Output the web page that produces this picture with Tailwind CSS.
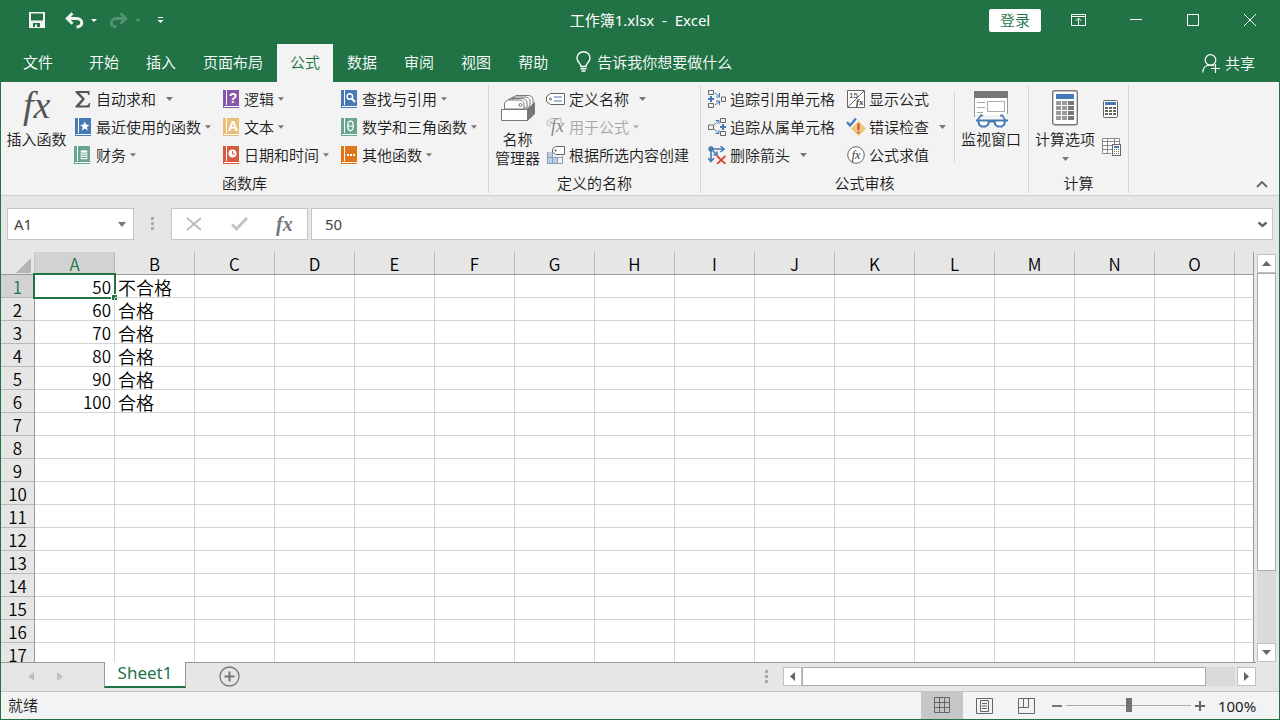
<!DOCTYPE html>
<html lang="zh-CN">
<head>
    <meta charset="UTF-8">
    <meta name="viewport" content="width=device-width, initial-scale=1.0">
    <title>工作簿1.xlsx - Excel</title>
    <script src="https://cdn.jsdelivr.net/npm/@tailwindcss/browser@4"></script>
</head>
<body class="h-screen flex flex-col overflow-hidden border-x border-b border-[#217346] bg-[#e6e6e6] font-['Noto_Sans','Noto_Sans_CJK_SC',sans-serif] font-[350] text-[15px] leading-5 text-[#1c1c1c]">

    <!-- title bar -->
    <header class="bg-[#217346] text-white">
        <div class="grid grid-cols-[1fr_auto_1fr] items-center h-11 pb-1">
            <div class="flex items-center pl-7">
                <button aria-label="保存">
                    <svg width="16" height="16" viewBox="0 0 16 16"><path d="M0 0h16v16H0zM2 1.500v7h12v-7zM4 11v4h2v-2.500h2V15h3v-4z" fill="#f3f3f3" fill-rule="evenodd"/></svg>
                </button>
                <button class="ml-5" aria-label="撤消">
                    <svg width="19" height="18" viewBox="0 0 19 18" fill="none" stroke="#f3f3f3"><path d="M3 7.500h8.500c7 0 7 8.500 0 8.500" stroke-width="3"/><path d="M7.500 2.300 2.200 7.500 7.500 12.700" stroke-width="2.800"/></svg>
                </button>
                <button class="ml-[7px]" aria-label="撤消选项">
                    <svg width="6" height="3" viewBox="0 0 6 3"><path d="M0 0h6L3 3z" fill="#fff"/></svg>
                </button>
                <button class="ml-3" aria-label="恢复" disabled>
                    <svg width="19" height="18" viewBox="0 0 19 18" fill="none" stroke="#529270"><path d="M16 7.500H7.500c-7 0-7 8.500 0 8.500" stroke-width="3"/><path d="M11.500 2.300 16.800 7.500 11.500 12.700" stroke-width="2.800"/></svg>
                </button>
                <button class="ml-[7px]" aria-label="恢复选项" disabled>
                    <svg width="6" height="3" viewBox="0 0 6 3"><path d="M0 0h6L3 3z" fill="#529270"/></svg>
                </button>
                <button class="ml-4" aria-label="自定义快速访问工具栏">
                    <svg width="7" height="6" viewBox="0 0 7 6"><path d="M1 0h5v1H1zM.5 3h6l-3 3z" fill="#fff"/></svg>
                </button>
            </div>
            <h1 class="text-[15px] font-normal whitespace-pre">工作簿1.xlsx  -  Excel</h1>
            <div class="flex items-center justify-end pr-px">
                <button class="bg-white text-[#217346] rounded-xs w-13 h-[23px] leading-[23px] mr-[9px]">登录</button>
                <button class="w-[57px] flex justify-center" aria-label="功能区显示选项">
                    <svg width="15" height="12" viewBox="0 0 15 12" fill="none" stroke="#fff"><path d="M.5.5h14v11H.5zM0 2.500h15M7.500 11V4.500M4.500 7l3-3 3 3"/></svg>
                </button>
                <button class="w-[57px] flex justify-center" aria-label="最小化">
                    <svg width="12" height="12" viewBox="0 0 12 12"><path d="M0 5h12v1H0z" fill="#fff"/></svg>
                </button>
                <button class="w-[57px] flex justify-center" aria-label="最大化">
                    <svg width="12" height="12" viewBox="0 0 12 12" fill="none" stroke="#fff"><path d="M.5.5h11v11H.5z"/></svg>
                </button>
                <button class="w-[57px] flex justify-center" aria-label="关闭">
                    <svg width="12" height="12" viewBox="0 0 12 12" stroke="#fff"><path d="M0 0l12 12M12 0L0 12"/></svg>
                </button>
            </div>
        </div>

        <!-- tabs -->
        <nav class="flex h-[38px]">
            <button class="px-[13px] pb-[3px] ml-[9px] mr-[10px]">文件</button>
            <div class="flex gap-px">
                <button class="px-[13px] pb-[3px]">开始</button>
                <button class="px-[13px] pb-[3px]">插入</button>
                <button class="px-[13px] pb-[3px]">页面布局</button>
                <button class="px-[13px] pb-[3px] bg-[#f3f3f3] text-[#217346]">公式</button>
                <button class="px-[13px] pb-[3px]">数据</button>
                <button class="px-[13px] pb-[3px]">审阅</button>
                <button class="px-[13px] pb-[3px]">视图</button>
                <button class="px-[13px] pb-[3px]">帮助</button>
            </div>
            <button class="flex items-center gap-[6px] ml-[15px] pb-[3px]">
                <svg width="15" height="21" viewBox="0 0 15 21" fill="none" stroke="#fff" stroke-width="1.400"><path d="M5 15.500c0-3-4-4.500-4-8.500a6.500 6.300 0 0 1 13 0c0 4-4 5.500-4 8.500zM4.500 17.800h6M5.500 20h4"/></svg>
                <span>告诉我你想要做什么</span>
            </button>
            <button class="flex items-center gap-1 ml-auto mr-6">
                <svg width="19" height="19" viewBox="0 0 19 19" fill="none" stroke="#fff" stroke-width="1.200"><circle cx="8.500" cy="6" r="5.300"/><path d="M.8 18.500c0-5 3-7.500 7.700-7.500 1.500 0 2.500.3 3.500.9M9 14.500h9M13.500 10v9"/></svg>
                <span>共享</span>
            </button>
        </nav>
    </header>

    <!-- ribbon -->
    <div class="flex bg-[#f3f3f3] border-b border-[#d0d0d0] pt-[3px] pb-[2px] whitespace-nowrap">
        <section class="w-[488px] border-r border-[#d4d4d4]">
            <div class="flex h-21">
                <button class="flex flex-col items-center w-[73px] pt-[5px] pr-[2px] leading-[19px]">
                    <svg class="overflow-visible" width="32" height="36" viewBox="0 0 32 36"><text x="2" y="28" font-family="Liberation Serif, serif" font-style="italic" font-size="38" fill="#555">fx</text></svg>
                    <span class="mt-1">插入函数</span>
                </button>
                <div class="grid grid-cols-[148px_118px_auto] grid-rows-3">
                    <button class="flex items-center">
                        <svg class="mr-1" width="18" height="18" viewBox="0 0 18 18"><path d="M1.500 1h14v4h-1.200c-.3-1.500-.8-2-2.300-2H5.500l5.500 6-5.500 6.500H12c1.700 0 2.500-.7 3-2.500h1.200L15.500 17.500h-14V16l6.500-7-6.500-6.500z" fill="#555"/></svg>
                        <span>自动求和</span>
                        <svg class="ml-[10px]" width="7" height="4" viewBox="0 0 7 4"><path d="M0 0h7L3.500 4z" fill="#777"/></svg>
                    </button>
                    <button class="flex items-center">
                        <svg class="mr-1" width="18" height="18" viewBox="0 0 18 18"><path d="M1 0h16v18H1z" fill="#477ab5"/><path d="M4 0h1v15H4zM2 16h15v1H2zM10.800 3.500l1.300 3.100 3.300.3-2.500 2.200.8 3.300-2.900-1.800-2.900 1.800.8-3.300-2.500-2.200 3.300-.3z" fill="#fff"/></svg>
                        <span>最近使用的函数</span>
                        <svg class="ml-1" width="6" height="4" viewBox="0 0 7 4"><path d="M0 0h7L3.500 4z" fill="#777"/></svg>
                    </button>
                    <button class="flex items-center">
                        <svg class="mr-1" width="18" height="18" viewBox="0 0 18 18"><path d="M0 0h16v18H0z" fill="#6aa68f"/><path d="M3 0h1v15H3zM1 16h15v1H1z" fill="#fff"/><ellipse cx="10" cy="5.500" rx="3.500" ry="1.300" fill="#fff"/><path d="M6.500 7.500c1.500 1 5.500 1 7 0M6.500 9.700c1.500 1 5.500 1 7 0M6.500 12c1.500 1 5.500 1 7 0" stroke="#fff" stroke-width="1.200" fill="none"/></svg>
                        <span>财务</span>
                        <svg class="ml-1" width="6" height="4" viewBox="0 0 7 4"><path d="M0 0h7L3.500 4z" fill="#777"/></svg>
                    </button>
                    <button class="flex items-center col-start-2 row-start-1">
                        <svg class="mr-1" width="18" height="18" viewBox="0 0 18 18"><path d="M1 0h16v18H1z" fill="#8756aa"/><path d="M4 0h1v15H4zM2 16h15v1H2z" fill="#fff"/><text x="11" y="13" text-anchor="middle" font-family="Liberation Sans, sans-serif" font-weight="bold" font-size="14" fill="#fff">?</text></svg>
                        <span>逻辑</span>
                        <svg class="ml-1" width="6" height="4" viewBox="0 0 7 4"><path d="M0 0h7L3.500 4z" fill="#777"/></svg>
                    </button>
                    <button class="flex items-center col-start-2 row-start-2">
                        <svg class="mr-1" width="18" height="18" viewBox="0 0 18 18"><path d="M1 0h16v18H1z" fill="#e9bf78"/><path d="M4 0h1v15H4zM2 16h15v1H2z" fill="#fff"/><text x="11" y="13" text-anchor="middle" font-family="Liberation Sans, sans-serif" font-weight="bold" font-size="14" fill="#fff">A</text></svg>
                        <span>文本</span>
                        <svg class="ml-1" width="6" height="4" viewBox="0 0 7 4"><path d="M0 0h7L3.500 4z" fill="#777"/></svg>
                    </button>
                    <button class="flex items-center col-start-2 row-start-3">
                        <svg class="mr-1" width="18" height="18" viewBox="0 0 18 18"><path d="M1 0h16v18H1z" fill="#d65a3f"/><path d="M4 0h1v15H4zM2 16h15v1H2z" fill="#fff"/><circle cx="10.500" cy="7.500" r="4" fill="#fff"/><path d="M10.500 5v3h2.500" stroke="#d65a3f" fill="none"/></svg>
                        <span>日期和时间</span>
                        <svg class="ml-1" width="6" height="4" viewBox="0 0 7 4"><path d="M0 0h7L3.500 4z" fill="#777"/></svg>
                    </button>
                    <button class="flex items-center col-start-3 row-start-1">
                        <svg class="mr-1" width="18" height="18" viewBox="0 0 18 18"><path d="M1 0h16v18H1z" fill="#477ab5"/><path d="M4 0h1v15H4zM2 16h15v1H2z" fill="#fff"/><circle cx="9.800" cy="6.500" r="2.800" fill="none" stroke="#fff" stroke-width="1.400"/><path d="M11.800 8.500l3.200 3.500" stroke="#fff" stroke-width="2"/></svg>
                        <span>查找与引用</span>
                        <svg class="ml-1" width="6" height="4" viewBox="0 0 7 4"><path d="M0 0h7L3.500 4z" fill="#777"/></svg>
                    </button>
                    <button class="flex items-center col-start-3 row-start-2">
                        <svg class="mr-1" width="18" height="18" viewBox="0 0 18 18"><path d="M1 0h16v18H1z" fill="#6aa68f"/><path d="M4 0h1v15H4zM2 16h15v1H2z" fill="#fff"/><ellipse cx="10.500" cy="8" rx="2.700" ry="4.800" fill="none" stroke="#fff" stroke-width="1.300"/><path d="M8 8h5" stroke="#fff"/></svg>
                        <span>数学和三角函数</span>
                        <svg class="ml-1" width="6" height="4" viewBox="0 0 7 4"><path d="M0 0h7L3.500 4z" fill="#777"/></svg>
                    </button>
                    <button class="flex items-center col-start-3 row-start-3">
                        <svg class="mr-1" width="18" height="18" viewBox="0 0 18 18"><path d="M1 0h16v18H1z" fill="#e2761b"/><path d="M4 0h1v15H4zM2 16h15v1H2zM7 8h2v2H7zM10 8h2v2h-2zM13 8h2v2h-2z" fill="#fff"/></svg>
                        <span>其他函数</span>
                        <svg class="ml-1" width="6" height="4" viewBox="0 0 7 4"><path d="M0 0h7L3.500 4z" fill="#777"/></svg>
                    </button>
                </div>
            </div>
            <h2 class="mt-1 font-[350] text-center">函数库</h2>
        </section>

        <section class="w-[212px] border-r border-[#d4d4d4]">
            <div class="flex h-21">
                <button class="flex flex-col items-center w-[57px] pt-[5px] leading-[19px]">
                    <svg width="36" height="36" viewBox="0 0 36 36" stroke="#777" fill="#fff">
                        <path d="M27.500 19.500l7-7v11.500l-7 6.500z" fill="#777"/>
                        <path d="M13 15V8l3-2.500h12c3 0 5 2 5 4V14l-5 5M10 16V9l3-2h12c3 0 5 2 5 4v4l-3 4M7 17v-6l3-2.500h12c3 0 5 2 5 4.500v5z"/>
                        <path d="M4.500 19v-6l3-3h12c2.500 0 4.500 1.500 4.500 4.500V19z"/>
                        <circle cx="20.500" cy="15" r="1.500"/>
                        <path d="M1.500 19.500h26v11h-26z"/>
                    </svg>
                    <span class="mt-1">名称<br>管理器</span>
                </button>
                <div class="grid grid-rows-3">
                    <button class="flex items-center">
                        <svg class="mr-1" width="19" height="18" viewBox="0 0 19 18" fill="#fff" stroke="#666"><path d="M4.500 3.500h14v11h-14l-4-3v-5z"/><circle cx="4.500" cy="9" r="1"/><path d="M8 7h8M8 11h8" stroke="#477ab5"/></svg>
                        <span>定义名称</span>
                        <svg class="ml-[10px]" width="7" height="4" viewBox="0 0 7 4"><path d="M0 0h7L3.500 4z" fill="#777"/></svg>
                    </button>
                    <button class="flex items-center text-[#a6a6a6]" disabled>
                        <svg class="mr-1 overflow-visible" width="19" height="18" viewBox="0 0 19 18" fill="none" stroke="#b1b1b1"><path d="M5 8.500l-4-2v-3l4-3h10v5"/><circle cx="5" cy="4.500" r="1"/><text x="5" y="14" font-family="Liberation Serif, serif" font-style="italic" font-size="18" fill="#888" stroke="none">fx</text></svg>
                        <span>用于公式</span>
                        <svg class="ml-1" width="6" height="4" viewBox="0 0 7 4"><path d="M0 0h7L3.500 4z" fill="#b1b1b1"/></svg>
                    </button>
                    <button class="flex items-center">
                        <svg class="mr-1" width="19" height="18" viewBox="0 0 19 18"><path d="M1 6h5v5H1zM1 12h5v5H1zM7 12h5v5H7z" fill="#b9cde5"/><path d="M1.500 6v11.500h15V10M6.500 6v11M11.500 11v6M1 11.500h15" stroke="#8c9db0" fill="none"/><path d="M9.500.5h9v8h-9l-3-2.500V3z" fill="#fff" stroke="#666"/><circle cx="9.500" cy="4.500" r="1" fill="#555"/></svg>
                        <span>根据所选内容创建</span>
                    </button>
                </div>
            </div>
            <h2 class="mt-1 font-[350] text-center">定义的名称</h2>
        </section>

        <section class="w-[328px] border-r border-[#d4d4d4]">
            <div class="flex h-21">
                <div class="grid grid-cols-[139px_107px] grid-rows-3 pl-[7px]">
                    <button class="flex items-center">
                        <svg class="mr-1" width="18" height="18" viewBox="0 0 18 18" fill="none"><path d="M.5.5h5v4h-5zM.5 13.500h5v4h-5zM13.500 7h4v4.500h-4z" stroke="#666"/><path d="M2 6h2v2h2v2H4v2H2v-2H0V8h2z" fill="#477ab5"/><path d="M7 3l4.500 3.500M11.500 3v4H8M7 15l4.500-3.500M11.500 15v-4H8" stroke="#477ab5"/></svg>
                        <span>追踪引用单元格</span>
                    </button>
                    <button class="flex items-center">
                        <svg class="mr-1" width="18" height="18" viewBox="0 0 18 18" fill="none"><path d="M12.500.5h5v4h-5zM12.500 13.500h5v4h-5zM.5 7h5v4.500h-5z" stroke="#666"/><path d="M14 6h2v2h2v2h-2v2h-2v-2h-2V8h2z" fill="#477ab5"/><path d="M6 7l5-4.500M7.500 2.500H11V6M6 11l5 4.500M7.500 15.500H11V12" stroke="#477ab5"/></svg>
                        <span>追踪从属单元格</span>
                    </button>
                    <button class="flex items-center">
                        <svg class="mr-1" width="18" height="18" viewBox="0 0 18 18" fill="none"><circle cx="3" cy="3" r="2.700" fill="#477ab5"/><path d="M4 3h11M12.500 0l3.500 3-3.500 3M3 4v11M0 12l3 3.500L6 12M5 5l4 4M9 5.500V9H5.500" stroke="#477ab5" stroke-width="1.600"/><path d="M9 10l8.500 8M17.500 10L9 18" stroke="#d6492a" stroke-width="1.800"/></svg>
                        <span>删除箭头</span>
                        <svg class="ml-[10px]" width="7" height="4" viewBox="0 0 7 4"><path d="M0 0h7L3.500 4z" fill="#777"/></svg>
                    </button>
                    <button class="flex items-center col-start-2 row-start-1">
                        <svg class="mr-1" width="18" height="18" viewBox="0 0 18 18"><path d="M.5.5h17v17H.5zM1 17L17 1" fill="#fff" stroke="#666"/><text x="2" y="8" font-family="Liberation Sans, sans-serif" font-size="8" fill="#333">15</text><text x="9" y="15" font-family="Liberation Serif, serif" font-style="italic" font-weight="bold" font-size="9" fill="#333">fx</text></svg>
                        <span>显示公式</span>
                    </button>
                    <button class="flex items-center col-start-2 row-start-2">
                        <svg class="mr-1 overflow-visible" width="18" height="18" viewBox="0 0 18 18"><path d="M11.500 3L19 10.500 11.500 18 4 10.500z" fill="#eec57c"/><path d="M10.500 5.500h2v6.500h-2zM10.500 13.500h2v2h-2z" fill="#d6492a"/><path d="M0 4l3 3.500L9 .5" stroke="#477ab5" stroke-width="2.200" fill="none"/></svg>
                        <span>错误检查</span>
                        <svg class="ml-[10px]" width="7" height="4" viewBox="0 0 7 4"><path d="M0 0h7L3.500 4z" fill="#777"/></svg>
                    </button>
                    <button class="flex items-center col-start-2 row-start-3">
                        <svg class="mr-1" width="18" height="18" viewBox="0 0 18 18"><circle cx="9" cy="9" r="8.300" fill="#fff" stroke="#666"/><text x="9" y="12.500" text-anchor="middle" font-family="Liberation Serif, serif" font-style="italic" font-size="12" fill="#333">fx</text></svg>
                        <span>公式求值</span>
                    </button>
                </div>
                <div class="w-px bg-[#d4d4d4] my-[7px]"></div>
                <button class="flex flex-col items-center flex-1 pt-[5px] pr-px leading-[19px]">
                    <svg width="36" height="38" viewBox="0 0 36 38" class="-mb-[2px]" fill="none">
                        <path d="M1.500 1v26M34.500 1v23" stroke="#999"/>
                        <path d="M2 7h32v18H2z" fill="#fff"/>
                        <path d="M1 1h34v7H1z" fill="#777"/>
                        <path d="M4 12.500h8M4 17.500h8M4 22.500h6M14.500 11.500h17v10h-17z" stroke="#aaa"/>
                        <path d="M4 31l4-6 2 1M33 31l-4-6-2 1" stroke="#477ab5" stroke-width="1.600"/>
                        <path d="M5.500 30.500h10.500l-.8 4-2.700 2H8.500l-2.500-2zM21.500 30.500H32l-.7 4-2.500 2h-4l-2.700-2zM16 31.500h6M3 30.500h32" stroke="#477ab5" stroke-width="2" fill="#fff"/>
                    </svg>
                    <span class="mt-1">监视窗口</span>
                </button>
            </div>
            <h2 class="mt-1 font-[350] text-center">公式审核</h2>
        </section>

        <section class="w-[100px] border-r border-[#d4d4d4]">
            <div class="flex h-21">
                <button class="flex flex-col items-center w-[72px] pt-[5px] leading-[19px]">
                    <svg width="26" height="36" viewBox="0 0 26 36">
                        <rect x=".7" y=".7" width="24.600" height="34" rx="2" fill="#fff" stroke="#777" stroke-width="1.400"/>
                        <path d="M4 4h18v5H4z" fill="#477ab5"/>
                        <path d="M4 11h5v4H4zM10 11h5v4h-5zM4 16h5v4H4zM10 16h5v4h-5zM4 21h5v4H4zM10 21h5v4h-5zM4 26h5v4H4zM10 26h5v4h-5z" fill="#999"/>
                        <path d="M16 11h6v4h-6zM16 16h6v4h-6zM16 21h6v4h-6zM16 26h6v4h-6z" fill="#777"/>
                    </svg>
                    <span class="mt-1">计算选项</span>
                    <svg class="mt-2" width="7" height="4" viewBox="0 0 7 4"><path d="M0 0h7L3.500 4z" fill="#777"/></svg>
                </button>
                <div class="flex flex-col pt-[15px] gap-5">
                    <button class="flex h-[18px] pl-[2px]" aria-label="开始计算">
                        <svg width="15" height="18" viewBox="0 0 15 18"><rect x=".5" y=".5" width="14" height="17" rx="1" fill="#fff" stroke="#666"/><path d="M2 2h11v3H2z" fill="#477ab5"/><path d="M2 7h3v2H2zM6 7h3v2H6zM10 7h3v2h-3zM2 10h3v2H2zM6 10h3v2H6zM10 10h3v2h-3zM2 13h3v2H2zM6 13h3v2H6zM10 13h3v2h-3z" fill="#666"/></svg>
                    </button>
                    <button class="flex h-[18px] pl-px" aria-label="计算工作表">
                        <svg width="19" height="18" viewBox="0 0 19 18"><path d="M.5.5h17v15H.5z" fill="#fff"/><path d="M9 15.500H.5V.5h17V6M.5 3.500h17M.5 7.500H11M.5 11.500H10M5.500 0v15M12.500 0v6" stroke="#888" fill="none"/><rect x="10.500" y="6.500" width="8" height="11" fill="#fff" stroke="#666"/><path d="M12 8h5v2h-5z" fill="#477ab5"/><path d="M12 11h1v1h-1zM14 11h1v1h-1zM16 11h1v1h-1zM12 13h1v1h-1zM14 13h1v1h-1zM16 13h1v1h-1zM12 15h1v1h-1zM14 15h1v1h-1zM16 15h1v1h-1z" fill="#777"/></svg>
                    </button>
                </div>
            </div>
            <h2 class="mt-1 font-[350] text-center">计算</h2>
        </section>

        <button class="self-end ml-auto mr-[11px] mb-[5px]" aria-label="折叠功能区">
            <svg width="12" height="7" viewBox="0 0 12 7" fill="none"><path d="M1 6l5-5 5 5" stroke="#666" stroke-width="1.800"/></svg>
        </button>
    </div>

    <!-- formula bar -->
    <div class="flex h-14 py-3 px-[6px] font-normal text-[#444]">
        <div class="flex items-center w-[127px] bg-white border border-[#c6c6c6]">
            <input class="min-w-0 flex-1 pl-[6px] outline-none" aria-label="名称框" value="A1">
            <button class="px-[7px]" aria-label="名称列表">
                <svg width="8" height="5" viewBox="0 0 8 5"><path d="M0 0h8L4 5z" fill="#777"/></svg>
            </button>
        </div>
        <div class="flex items-center justify-center w-[37px]">
            <svg width="3" height="14" viewBox="0 0 3 14"><path d="M0 0h3v3H0zM0 5h3v3H0zM0 10h3v3H0z" fill="#aaa"/></svg>
        </div>
        <div class="flex items-center justify-around w-[137px] bg-white border border-[#c6c6c6]">
            <button aria-label="取消">
                <svg width="16" height="14" viewBox="0 0 16 14"><path d="M1 1l14 12M15 1L1 13" stroke="#bdbdbd" stroke-width="2"/></svg>
            </button>
            <button aria-label="输入">
                <svg width="17" height="14" viewBox="0 0 17 14"><path d="M1 7.500l4.500 4.500L16 1" fill="none" stroke="#c3c3c3" stroke-width="3"/></svg>
            </button>
            <button class="font-['Liberation_Serif',serif] italic font-bold text-[20px] leading-6 text-[#777]" aria-label="插入函数">fx</button>
        </div>
        <div class="flex flex-1 items-center ml-[3px] bg-white border border-[#c6c6c6]">
            <input class="min-w-0 flex-1 pl-[13px] outline-none" aria-label="编辑栏" value="50">
            <button class="px-1" aria-label="展开编辑栏">
                <svg width="11" height="7" viewBox="0 0 11 7" fill="none"><path d="M1.500 1.500l4 3.500 4-3.500" stroke="#666" stroke-width="2.400"/></svg>
            </button>
        </div>
    </div>

    <!-- worksheet -->
    <main class="flex flex-1 min-h-0">
        <div class="flex-1 min-w-0 overflow-hidden border-r border-[#999]">
            <table class="table-fixed w-full border-separate border-spacing-0 font-['Noto_Sans_CJK_SC',sans-serif] text-black text-[17px] leading-5">
                <thead>
                    <tr id="letters">
                        <th class="w-[34px] h-[23px] p-0 border-r border-b border-r-[#c6c6c6] border-b-[#999]">
                            <svg class="ml-auto mr-[3px] mt-1" width="15" height="15" viewBox="0 0 15 15"><path d="M15 0v15H0z" fill="#b4b4b4"/></svg>
                        </th>
                    </tr>
                </thead>
                <tbody id="rows" class="bg-white"></tbody>
            </table>
        </div>
        <div class="flex flex-col w-[19px] ml-[3px] mr-[3px] mt-[2px] bg-[#dadada]">
            <button class="flex items-center justify-center h-[19px] bg-white border border-[#c0c0c0]" aria-label="向上滚动">
                <svg width="9" height="5" viewBox="0 0 9 5"><path d="M0 5h9L4.500 0z" fill="#666"/></svg>
            </button>
            <div class="h-[73%] bg-white border border-[#ababab]"></div>
            <button class="flex items-center justify-center h-[19px] mt-auto bg-white border border-[#c0c0c0]" aria-label="向下滚动">
                <svg width="9" height="5" viewBox="0 0 9 5"><path d="M0 0h9L4.500 5z" fill="#666"/></svg>
            </button>
        </div>
    </main>

    <!-- sheet tabs -->
    <div class="flex h-[29px] pr-[23px]">
        <div class="flex flex-1 pb-px border-t border-[#999]">
            <button class="w-[56px] pl-1 flex items-center justify-center" aria-label="上一张工作表">
                <svg width="6" height="9" viewBox="0 0 6 9"><path d="M6 0v9L0 4.500z" fill="#c0c0c0"/></svg>
            </button>
            <button class="w-[47px] flex items-center" aria-label="下一张工作表">
                <svg width="6" height="9" viewBox="0 0 6 9"><path d="M0 0v9l6-4.500z" fill="#c0c0c0"/></svg>
            </button>
            <button class="-mt-px h-[26px] w-[82px] pb-[2px] bg-white font-normal text-[#217346] text-[17px] leading-[22px] border-x border-x-[#999] border-b-2 border-b-[#217346]">Sheet1</button>
            <button class="ml-[33px]" aria-label="新工作表">
                <svg width="21" height="21" viewBox="0 0 21 21" fill="none" stroke="#777"><circle cx="10.500" cy="10.500" r="9.500" stroke-width="1.300"/><path d="M5.500 10.500h10M10.500 5.500v10" stroke-width="2"/></svg>
            </button>
        </div>
        <div class="flex w-[503px] pb-px border-t border-[#999] items-center">
            <svg class="mx-[12px]" width="3" height="13" viewBox="0 0 3 13"><path d="M0 0h3v3H0zM0 5h3v3H0zM0 10h3v3H0z" fill="#aaa"/></svg>
            <div class="flex flex-1 h-[19px] ml-[3px] bg-[#dadada]">
                <button class="flex items-center justify-center w-[19px] bg-white border border-[#c0c0c0]" aria-label="向左滚动">
                    <svg width="5" height="9" viewBox="0 0 5 9"><path d="M5 0v9L0 4.500z" fill="#666"/></svg>
                </button>
                <div class="flex-1 bg-white border border-[#ababab]"></div>
                <div class="w-[31px] border-r-2 border-[#e6e6e6]"></div>
                <button class="flex items-center justify-center w-[19px] bg-white border border-[#c0c0c0]" aria-label="向右滚动">
                    <svg width="5" height="9" viewBox="0 0 5 9"><path d="M0 0v9l5-4.500z" fill="#666"/></svg>
                </button>
            </div>
        </div>
    </div>

    <!-- status bar -->
    <footer class="flex items-center h-[28px] bg-[#f3f3f3] border-t border-[#c6c6c6]">
        <span class="pl-[7px] pb-[2px] mr-auto">就绪</span>
        <button class="flex items-center justify-center w-[42px] h-full bg-[#c6c6c6]" aria-label="普通">
            <svg width="17" height="17" viewBox="0 0 17 17" fill="none" stroke="#666"><path d="M.5.5h15v15H.5zM5.500.5v15M10.500.5v15M.5 5.500h15M.5 10.500h15"/></svg>
        </button>
        <button class="flex items-center justify-center w-[42px] h-full" aria-label="页面布局">
            <svg width="17" height="16" viewBox="0 0 17 16" fill="none" stroke="#666"><path d="M.5.5h16v15H.5zM4.500 2.500h8v11h-8zM6 5.500h5M6 8h5M6 10.500h5"/></svg>
        </button>
        <button class="flex items-center justify-center w-[42px] h-full" aria-label="分页预览">
            <svg width="17" height="16" viewBox="0 0 17 16" fill="none" stroke="#666"><path d="M.5.5h16v15H.5zM.5 9.500h10V.5M5.500.5v9"/></svg>
        </button>
        <button class="ml-[5px]" aria-label="缩小">
            <svg width="10" height="10" viewBox="0 0 10 10"><path d="M0 4h10v2H0z" fill="#777"/></svg>
        </button>
        <input type="range" min="0" max="200" value="100" aria-label="缩放" class="w-[125px] h-[15px] mx-1 appearance-none bg-transparent [&::-webkit-slider-runnable-track]:h-px [&::-webkit-slider-runnable-track]:bg-[#ababab] [&::-webkit-slider-thumb]:appearance-none [&::-webkit-slider-thumb]:w-[6px] [&::-webkit-slider-thumb]:h-[14px] [&::-webkit-slider-thumb]:-mt-[7px] [&::-webkit-slider-thumb]:bg-[#737373]">
        <button aria-label="放大">
            <svg width="10" height="10" viewBox="0 0 10 10"><path d="M0 4h4V0h2v4h4v2H6v4H4V6H0z" fill="#666"/></svg>
        </button>
        <button class="w-10 ml-3 mr-[22px] font-normal">100%</button>
    </footer>

    <script>
        var letters = 'ABCDEFGHIJKLMNO'.split('');
        var data = [[50, '不合格'], [60, '合格'], [70, '合格'], [80, '合格'], [90, '合格'], [100, '合格']];

        // column headers
        var head = '';
        letters.forEach(function (l, i) {
            var cls = i === 0 ? 'bg-[#d2d2d2] text-[#217346]' : '';
            head += '<th class="w-[80px] p-0 pt-[2px] font-[350] border-r border-b border-r-[#b8b8b8] border-b-[#999] ' + cls + '">' + l + '</th>';
        });
        head += '<th class="p-0 border-b border-b-[#999]"></th>';
        document.getElementById('letters').insertAdjacentHTML('beforeend', head);

        // rows, the last one is cut off by the tab bar
        var body = '';
        for (var r = 0; r < 17; r++) {
            var rowCls = r === 0 ? 'bg-[#d2d2d2] text-[#217346]' : 'bg-[#e6e6e6]';
            body += '<tr><th class="h-[23px] p-0 pt-[2px] font-[350] border-r border-b border-r-[#999] border-b-[#b8b8b8] ' + rowCls + '">' + (r + 1) + '</th>';
            for (var c = 0; c <= letters.length; c++) {
                var value = data[r] && data[r][c] !== undefined ? data[r][c] : '';
                var align = c === 0 ? 'text-right pr-[3px]' : 'pl-[3px] text-[18px]';
                var edge = c === letters.length ? '' : 'border-r';
                body += '<td class="relative p-0 pt-[2px] whitespace-nowrap border-b border-[#d4d4d4] ' + edge + ' ' + align + '">' + value;
                if (r === 0 && c === 0) {
                    body += '<div class="absolute -inset-[2px] border-2 border-[#217346]"></div>'
                        + '<div class="absolute -right-[3px] -bottom-[3px] size-[6px] bg-[#217346] border-t border-l border-white"></div>';
                }
                body += '</td>';
            }
            body += '</tr>';
        }
        document.getElementById('rows').innerHTML = body;
    </script>
</body>
</html>
